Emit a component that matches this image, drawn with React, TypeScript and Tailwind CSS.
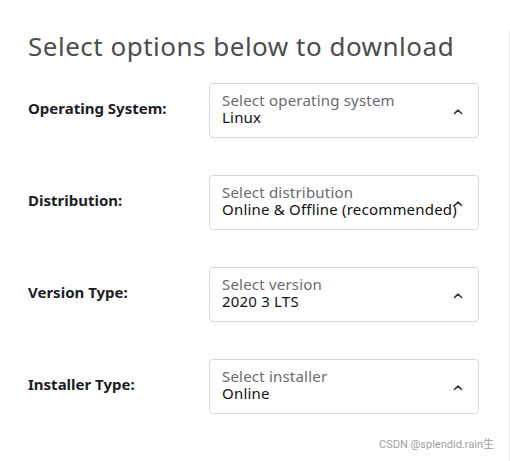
import React from "react";

const rows = [
  { label: "Operating System:", placeholder: "Select operating system", value: "Linux" },
  { label: "Distribution:", placeholder: "Select distribution", value: "Online & Offline (recommended)" },
  { label: "Version Type:", placeholder: "Select version", value: "2020 3 LTS" },
  { label: "Installer Type:", placeholder: "Select installer", value: "Online" },
];

function Chevron() {
  return (
    <svg className="absolute right-[15px] top-[24px]" width="10" height="7" viewBox="0 0 10 7" fill="none">
      <polyline points="1.5,5.5 5,2 8.5,5.5" stroke="#333" strokeWidth="1.6" strokeLinecap="round" strokeLinejoin="round" />
    </svg>
  );
}

export default function App() {
  return (
    <div className="w-[510px] h-[461px] bg-white overflow-hidden pt-[30px] font-['Noto_Sans',sans-serif]">
      <div className="h-full border-r border-[#ececec] pl-[28px] pt-[1px] flex flex-col">
        <h1 className="text-[26px] leading-[30px] tracking-[0.5px] text-[#4d4d4d] font-normal">Select options below to download</h1>
        <div className="mt-[22px] flex flex-col gap-[37px]">
          {rows.map((r) => (
            <div key={r.label} className="flex items-start">
              <div className="w-[181px] pt-[15px] text-[15px] leading-[20px] font-bold text-[#1d1d26]">{r.label}</div>
              <div className="relative w-[270px] h-[55px] rounded-[4px] border border-[#d9d9d9] pl-[12px] pt-[8px] tracking-[0.2px]">
                <div className="text-[15px] leading-[17px] text-[#6b6b6b] whitespace-nowrap">{r.placeholder}</div>
                <div className="text-[15px] leading-[17px] text-[#111] whitespace-nowrap">{r.value}</div>
                <Chevron />
              </div>
            </div>
          ))}
        </div>
        <div className="mt-[24px] pr-[15px] flex justify-end">
          <span className="text-[11px] leading-[14px] text-[#a0a0a0] font-['Roboto','Noto_Sans_CJK_SC',sans-serif] whitespace-nowrap">
            CSDN @splendid.rain生
          </span>
        </div>
      </div>
    </div>
  );
}
